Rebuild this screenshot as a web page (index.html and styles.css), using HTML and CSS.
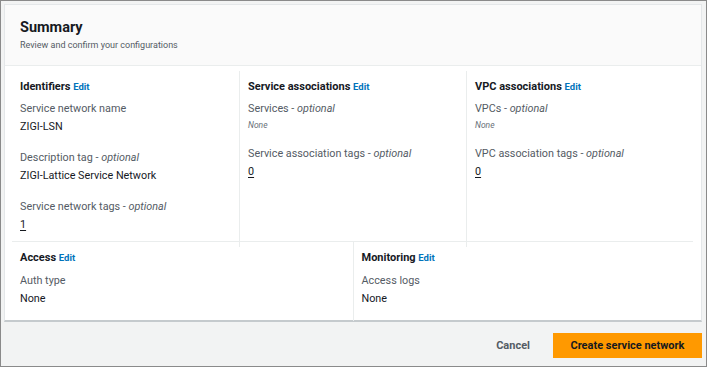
FILE: index.html
```
<!DOCTYPE html>
<html lang="en">
<head>
	<meta charset="UTF-8">
	<title>Summary</title>
	<link rel="stylesheet" href="styles.css">
</head>
<body>
	<div class="frame">
		<div class="card">
			<div class="card-head">
				<h2>Summary</h2>
				<p>Review and confirm your configurations</p>
			</div>
			<div class="card-body">
				<div class="row row3">
					<div class="col">
						<h3>Identifiers <a href="#">Edit</a></h3>
						<div class="field">
							<div class="label">Service network name</div>
							<div class="value">ZIGI-LSN</div>
						</div>
						<div class="field">
							<div class="label">Description tag - <i>optional</i></div>
							<div class="value">ZIGI-Lattice Service Network</div>
						</div>
						<div class="field">
							<div class="label">Service network tags - <i>optional</i></div>
							<div class="value"><u>1</u></div>
						</div>
					</div>
					<div class="col">
						<h3>Service associations <a href="#">Edit</a></h3>
						<div class="field">
							<div class="label">Services - <i>optional</i></div>
							<div class="none">None</div>
						</div>
						<div class="field">
							<div class="label">Service association tags - <i>optional</i></div>
							<div class="value"><u>0</u></div>
						</div>
					</div>
					<div class="col">
						<h3>VPC associations <a href="#">Edit</a></h3>
						<div class="field">
							<div class="label">VPCs - <i>optional</i></div>
							<div class="none">None</div>
						</div>
						<div class="field">
							<div class="label">VPC association tags - <i>optional</i></div>
							<div class="value"><u>0</u></div>
						</div>
					</div>
				</div>
				<div class="row row2">
					<div class="col">
						<h3>Access <a href="#">Edit</a></h3>
						<div class="field">
							<div class="label">Auth type</div>
							<div class="value">None</div>
						</div>
					</div>
					<div class="col">
						<h3>Monitoring <a href="#">Edit</a></h3>
						<div class="field">
							<div class="label">Access logs</div>
							<div class="value">None</div>
						</div>
					</div>
				</div>
			</div>
		</div>
		<div class="actions">
			<button class="cancel">Cancel</button>
			<button class="primary">Create service network</button>
		</div>
	</div>
</body>
</html>
```
FILE: styles.css
```
*{
	margin: 0;
	padding: 0;
	box-sizing: border-box;
}
body{
	font-family: Roboto, "Liberation Sans", sans-serif;
	color: #16191f;
}
.frame{
	width: 707px;
	height: 367px;
	border: 1px solid #8a8a8a;
	background: #f2f3f3;
	padding: 3px 4px 0 3px;
}
.card{
	background: #fff;
	border: 1px solid #e4e7e9;
	border-bottom: 2px solid #c5cacd;
	height: 318px;
}
.card-head{
	background: #fafafa;
	border-bottom: 1px solid #eaeded;
	height: 61px;
	padding: 13px 15px 0 15px;
}
.card-head h2{
	font-size: 14.5px;
	font-weight: 700;
	line-height: 20px;
}
.card-head p{
	font-size: 9px;
	line-height: 14px;
	color: #545b64;
}
.card-body{
	padding: 0 8px 0 7px;
}
.row{
	display: grid;
}
.row3{
	grid-template-columns: 1fr 1fr 1fr;
	border-bottom: 1px solid #eaeded;
	padding-top: 5px;
	height: 176px;
}
.row2{
	grid-template-columns: 1fr 1fr;
	height: 74px;
}
.col{
	padding: 8px 8px 0 8px;
}
.col + .col{
	border-left: 1px solid #eaeded;
}
.col h3{
	font-size: 11px;
	font-weight: 700;
	line-height: 16px;
	margin-bottom: 5px;
}
.row2 .col h3{
	margin-bottom: 6px;
}
.col h3 a{
	font-size: 9.5px;
	color: #0073bb;
	text-decoration: none;
}
.field{
	margin-bottom: 13px;
}
.label{
	font-size: 10.8px;
	line-height: 18px;
	color: #545b64;
}
.value{
	font-size: 10.8px;
	line-height: 18px;
}
.value u{
	text-underline-offset: 2px;
}
.none{
	font-size: 8.5px;
	font-style: italic;
	line-height: 14px;
	color: #687078;
}
.actions{
	display: flex;
	justify-content: flex-end;
	align-items: center;
	height: 44px;
	padding-top: 2px;
}
.actions button{
	font-family: Roboto, "Liberation Sans", sans-serif;
	font-size: 11px;
	font-weight: 700;
	border: none;
	height: 25px;
	cursor: pointer;
}
.cancel{
	background: none;
	color: #545b64;
	padding: 0 23px 0 15px;
}
.primary{
	background: #ff9900;
	color: #16191f;
	width: 149px;
}
```
